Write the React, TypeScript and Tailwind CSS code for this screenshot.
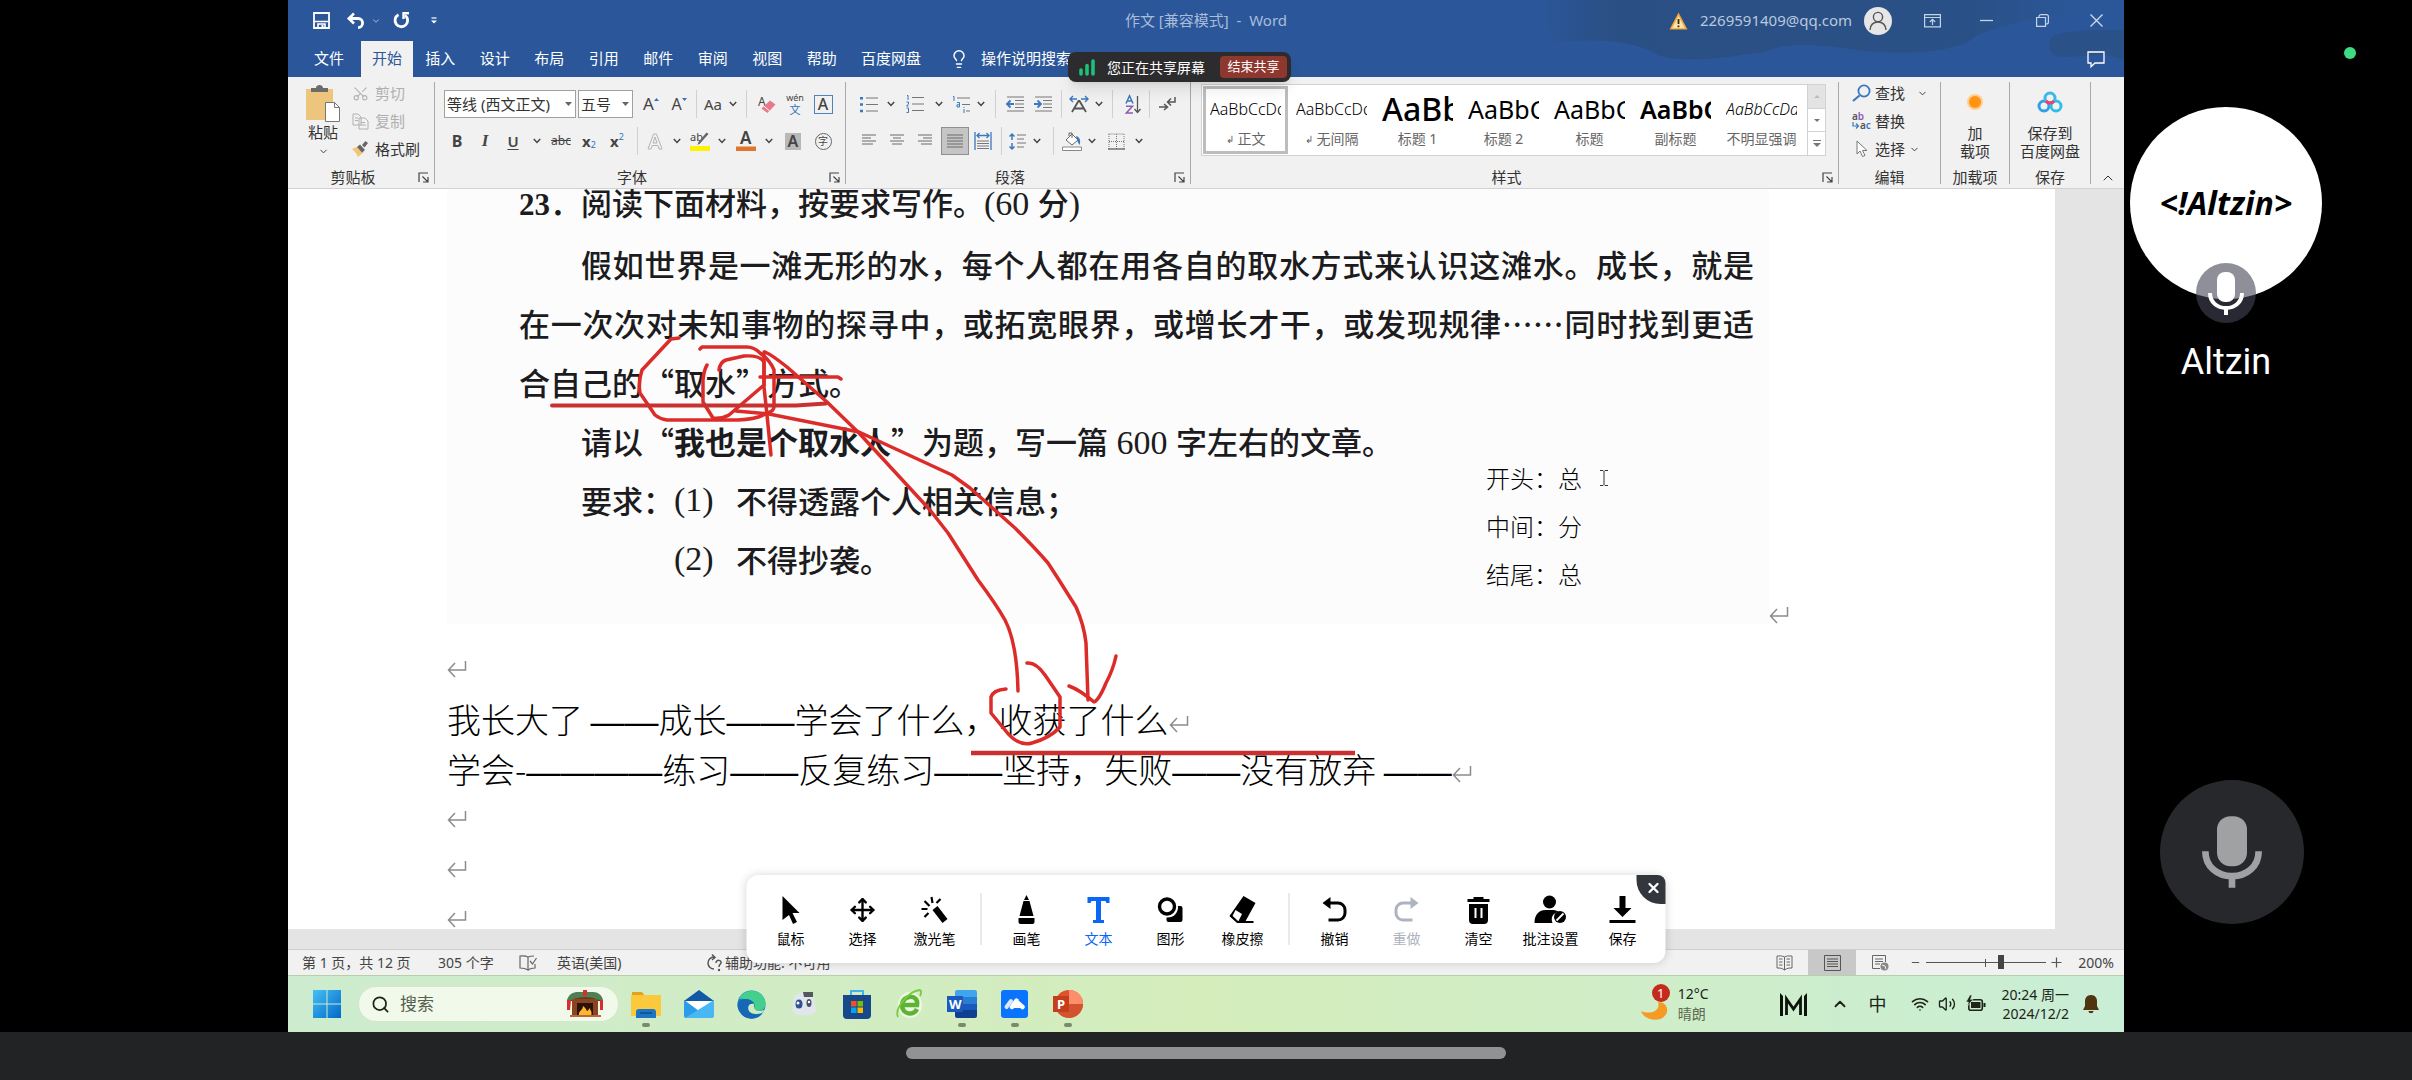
import { ReactNode } from "react";
import { clsx } from "clsx";
import {
    ChevronDown,
    ChevronUp,
    Lightbulb,
    Minus,
    Move,
    Scissors,
    Search,
    Volume2,
    Wifi,
    X,
} from "lucide-react";

const tabs = ["插入", "设计", "布局", "引用", "邮件", "审阅", "视图", "帮助"];

const styles = [
    { name: "正文", sample: "AaBbCcDd", look: "text-[16px] font-light", mark: true },
    { name: "无间隔", sample: "AaBbCcDd", look: "text-[16px] font-light", mark: true },
    { name: "标题 1", sample: "AaBb", look: "text-[32px] font-medium" },
    { name: "标题 2", sample: "AaBbC", look: "text-[25px]" },
    { name: "标题", sample: "AaBbC", look: "text-[25px]" },
    { name: "副标题", sample: "AaBbC", look: "text-[25px] font-semibold" },
    { name: "不明显强调", sample: "AaBbCcDd", look: "text-[16px] font-light italic text-[#404040]" },
];

function Svg({
    w,
    h,
    box,
    className = "",
    children,
}: {
    w: number;
    h: number;
    box?: string;
    className?: string;
    children: ReactNode;
}) {
    return (
        <svg
            width={w}
            height={h}
            viewBox={box ?? `0 0 ${w} ${h}`}
            fill="none"
            className={clsx("shrink-0 overflow-visible", className)}
            aria-hidden="true"
        >
            {children}
        </svg>
    );
}

function Tool({
    label,
    className = "w-7",
    children,
}: {
    label: string;
    className?: string;
    children: ReactNode;
}) {
    return (
        <button
            type="button"
            aria-label={label}
            className={clsx("flex h-7 shrink-0 items-center justify-center", className)}
        >
            {children}
        </button>
    );
}

function Chev({ className = "w-4", label = "更多" }: { className?: string; label?: string }) {
    return (
        <Tool label={label} className={className}>
            <Svg w={8} h={6}>
                <path d="M0.8 1l3.2 3.4L7.2 1" stroke="#444" strokeWidth="1.5" />
            </Svg>
        </Tool>
    );
}

function Sep({ className = "w-4" }: { className?: string }) {
    return (
        <span className={clsx("flex h-7 shrink-0 justify-center", className)}>
            <span className="h-full w-px bg-[#d0d0d0]" />
        </span>
    );
}

function Divider() {
    return <div className="mt-[5px] mb-1 w-px shrink-0 bg-[#a8a8a8]" />;
}

function Group({
    title,
    launcher = false,
    className = "",
    children,
}: {
    title: string;
    launcher?: boolean;
    className?: string;
    children: ReactNode;
}) {
    return (
        <section className={clsx("flex h-full flex-col", className)}>
            <div className="flex-1">{children}</div>
            <div className="flex h-[22px] items-center">
                <span className="flex-1 text-center text-[#333]">{title}</span>
                {launcher && (
                    <button type="button" aria-label={`${title}设置`} className="w-4">
                        <Svg w={11} h={11}>
                            <path d="M1 10V1h9M4.5 4.5l5 5M10 5v5H5" stroke="#444" strokeWidth="1.2" />
                        </Svg>
                    </button>
                )}
            </div>
        </section>
    );
}

function Combo({ label, value, className }: { label: string; value: string; className: string }) {
    return (
        <span className={clsx("relative h-7 shrink-0", className)}>
            <select
                aria-label={label}
                defaultValue={value}
                className="h-full w-full appearance-none border border-[#a0a0a0] bg-white pl-[2px] text-[15px] text-[#333]"
            >
                <option>{value}</option>
            </select>
            <Svg w={7} h={4} className="absolute top-3 right-1">
                <path d="M0 0h7L3.500 4z" fill="#666" />
            </Svg>
        </span>
    );
}

// stacked text lines used by the alignment buttons
function Lines({ rows }: { rows: number[][] }) {
    return (
        <Svg w={16} h={14}>
            {rows.map(([a, b], i) => (
                <path key={i} d={`M${a} ${1 + i * 3}H${b}`} stroke="#6a6a6a" />
            ))}
        </Svg>
    );
}

function TitleBar() {
    return (
        <div className="relative flex h-[41px] items-center bg-[#2b579a] text-white">
            <Svg w={600} h={77} className="pointer-events-none absolute top-0 right-0">
                <defs>
                    <linearGradient id="swirl" x1="0" y1="0" x2="1" y2="0">
                        <stop stopColor="#2b579a" />
                        <stop offset="0.15" stopColor="#2a4f84" />
                        <stop offset="0.8" stopColor="#2a5187" />
                        <stop offset="1" stopColor="#2b579a" />
                    </linearGradient>
                </defs>
                <path
                    d="M10 0C24 18 24 42 34 43 70 38 110 40 136 56 170 64 210 56 240 52 262 42 290 44 340 51 390 56 440 50 452 36 470 28 500 20 540 14L560 0Z"
                    fill="url(#swirl)"
                />
                <path d="M600 30C570 30 535 30 527 38 522 52 528 58 545 57 565 56 580 52 600 60Z" fill="#2a5188" />
            </Svg>
            <div className="relative flex items-center pl-[25px]">
                <button type="button" aria-label="保存" className="w-[34px]">
                    <Svg w={17} h={17}>
                        <path d="M1 1h15v15H1z" stroke="#fff" strokeWidth="1.8" />
                        <path d="M2 9.500h13M5 16v-4h7v4" stroke="#fff" strokeWidth="1.6" />
                        <path d="M8.500 13h2v3h-2z" fill="#fff" />
                    </Svg>
                </button>
                <button type="button" aria-label="撤销" className="w-6">
                    <Svg w={18} h={16}>
                        <path d="M2.500 5.500H11a4.600 4.600 0 010 9.200" stroke="#fff" strokeWidth="2.8" />
                        <path d="M7 0.500L1.800 5.500 7 10.500" stroke="#fff" strokeWidth="2.6" />
                    </Svg>
                </button>
                <button type="button" aria-label="撤销列表" className="w-[22px]">
                    <ChevronDown size={10} color="#c5d2e6" />
                </button>
                <button type="button" aria-label="重复" className="w-[38px]">
                    <Svg w={17} h={17}>
                        <path d="M5.500 2.800A6.300 6.300 0 1012 3.300" stroke="#fff" strokeWidth="2.8" />
                        <path d="M16 1.300h-5.500V7" stroke="#fff" strokeWidth="2.4" />
                    </Svg>
                </button>
                <button type="button" aria-label="自定义快速访问工具栏">
                    <Svg w={6} h={7}>
                        <path d="M0.500 1h5" stroke="#fff" strokeWidth="1.2" />
                        <path d="M0 3.500h6L3 6.500z" fill="#fff" />
                    </Svg>
                </button>
            </div>
            <h1 className="absolute inset-x-0 text-center text-[15px] whitespace-pre text-[#a9bcd9]">
                作文 [兼容模式]  -  Word
            </h1>
            <div className="relative ml-auto flex items-center text-[#b9c8de]">
                <Svg w={19} h={18} className="mr-3">
                    <path d="M9.500 0.500L18.500 17.500H0.500z" fill="#f0a63c" />
                    <path d="M9.500 4L16 16.200H3z" fill="#ffe3a6" />
                    <path d="M9.500 7v5M9.500 13.500v1.800" stroke="#3c2a10" strokeWidth="1.8" />
                </Svg>
                <span className="mr-3 text-[15px]">2269591409@qq.com</span>
                <span className="mr-8 flex h-7 w-7 items-center justify-center rounded-full bg-[#e6e6e6]">
                    <Svg w={18} h={20}>
                        <circle cx="9" cy="6" r="4.600" stroke="#555" strokeWidth="1.4" />
                        <path d="M1 19c0-5 3.500-8 8-8s8 3 8 8" stroke="#555" strokeWidth="1.4" />
                    </Svg>
                </span>
                <button type="button" aria-label="功能区显示选项" className="w-[56px]">
                    <Svg w={17} h={14}>
                        <path d="M0.600 0.600h15.800v12.200H0.600zM0.600 3.500h15.800M8.500 11V5.500M5.800 8l2.700-2.700L11.200 8" stroke="#c6d3e6" strokeWidth="1.2" />
                    </Svg>
                </button>
                <button type="button" aria-label="最小化" className="w-[56px]">
                    <Svg w={13} h={14}>
                        <path d="M0 6.500h13" stroke="#c6d3e6" strokeWidth="1.3" />
                    </Svg>
                </button>
                <button type="button" aria-label="还原" className="w-[54px]">
                    <Svg w={13} h={13}>
                        <path d="M0.600 3.500h8.900v8.900H0.600zM3 3.500V2.600a2 2 0 012-2h5.400a2 2 0 012 2V8a2 2 0 01-2 2h-.9" stroke="#c6d3e6" strokeWidth="1.2" />
                    </Svg>
                </button>
                <button type="button" aria-label="关闭" className="w-[34px]">
                    <Svg w={13} h={13}>
                        <path d="M0.500 0.500l12 12M12.500 0.500l-12 12" stroke="#d3dcea" strokeWidth="1.3" />
                    </Svg>
                </button>
            </div>
        </div>
    );
}

function TabRow() {
    return (
        <nav className="flex h-9 items-stretch bg-[#2b579a] text-[15px] text-white">
            <button type="button" className="ml-2 w-[65px] pb-px pl-px">
                文件
            </button>
            <button type="button" className="w-[52px] bg-[#f1f1f1] pb-px text-[#2b579a]">
                开始
            </button>
            <div className="grid w-[436px] grid-cols-8">
                {tabs.map((tab) => (
                    <button type="button" key={tab} className="pb-px whitespace-nowrap">
                        {tab}
                    </button>
                ))}
            </div>
            <button type="button" className="w-[84px] pb-px whitespace-nowrap">
                百度网盘
            </button>
            <button type="button" className="ml-4 flex items-center gap-3 pb-px whitespace-nowrap">
                <Lightbulb size={20} strokeWidth={1.700} />
                操作说明搜索
            </button>
            <button type="button" aria-label="批注" className="relative ml-auto w-[37px]">
                <Svg w={18} h={17}>
                    <path d="M1 1h16v11H8l-4 3.800V12H1z" stroke="#fff" strokeWidth="1.3" />
                </Svg>
            </button>
        </nav>
    );
}

function FontRows() {
    return (
        <div className="flex flex-col gap-[9px] pt-[13px] pl-2 text-[#444]">
            <div className="flex pl-px">
                <Combo label="字体" value="等线 (西文正文)" className="mr-[2px] w-[132px]" />
                <Combo label="字号" value="五号" className="mr-1 w-[55px]" />
                <Tool label="增大字号">
                    <span className="text-[17px]">A</span>
                    <Svg w={5} h={12}>
                        <path d="M0 3h5L2.500 0z" fill="#3b6fb5" />
                    </Svg>
                </Tool>
                <Tool label="减小字号">
                    <span className="text-[16px]">A</span>
                    <Svg w={5} h={12}>
                        <path d="M0 0h5L2.500 3z" fill="#3b6fb5" />
                    </Svg>
                </Tool>
                <Sep className="w-1.5" />
                <Tool label="更改大小写">
                    <span className="text-[15px]">Aa</span>
                </Tool>
                <Chev className="w-3" />
                <Sep className="w-3.5" />
                <Tool label="清除所有格式">
                    <Svg w={18} h={19}>
                        <text x="0" y="11" fontSize="12" fill="#444" fontFamily="Noto Sans">A</text>
                        <path d="M3.500 13.500L12 5.500l5.500 4L9.500 18z" fill="#e8788a" />
                        <path d="M6 11.200l5.500 4.800" stroke="#fff" />
                    </Svg>
                </Tool>
                <Tool label="拼音指南" className="w-7 flex-col">
                    <span className="text-[9px] leading-[10px]">wén</span>
                    <span className="text-[11px] leading-[13px] text-[#2f70b8]">文</span>
                </Tool>
                <Tool label="字符边框">
                    <span className="flex h-[19px] w-[19px] items-center justify-center border border-[#4f83bf] text-[16px] font-medium">
                        A
                    </span>
                </Tool>
            </div>
            <div className="flex">
                <Tool label="加粗">
                    <b className="text-[16px]">B</b>
                </Tool>
                <Tool label="倾斜">
                    <i className="font-['Liberation_Serif',serif] text-[17px] font-bold">I</i>
                </Tool>
                <Tool label="下划线">
                    <span className="text-[15px] font-semibold underline underline-offset-2">U</span>
                </Tool>
                <Chev className="w-5" />
                <Tool label="删除线">
                    <s className="text-[12px]">abc</s>
                </Tool>
                <Tool label="下标">
                    <b className="text-[15px]">x</b>
                    <span className="mt-2 text-[9px] text-[#2f70b8]">2</span>
                </Tool>
                <Tool label="上标">
                    <b className="text-[15px]">x</b>
                    <span className="mb-2 text-[9px] text-[#2f70b8]">2</span>
                </Tool>
                <Sep className="w-3" />
                <Tool label="文本效果" className="w-6">
                    <Svg w={16} h={17}>
                        <path d="M1 16L6.500 1h3L15 16h-3l-1.200-3.500H5.200L4 16zM6 10h4L8 4z" stroke="#b4b4b4" />
                    </Svg>
                </Tool>
                <Chev className="w-5" />
                <Tool label="突出显示" className="w-[26px]">
                    <Svg w={20} h={20}>
                        <text x="0" y="10" fontSize="11" fill="#444" fontFamily="Noto Sans">ab</text>
                        <path d="M18.500 3L10 12.500 7.500 14l1-3L16.500 1.500z" fill="#666" />
                        <path d="M0 15h20v5H0z" fill="#fff200" />
                    </Svg>
                </Tool>
                <Chev className="w-[18px]" />
                <Tool label="字体颜色" className="w-[30px]">
                    <Svg w={20} h={20}>
                        <text x="4" y="13" fontSize="17" fill="#444" fontFamily="Noto Sans" fontWeight="600">A</text>
                        <path d="M0 15.500h20V20H0z" fill="#e0762c" />
                    </Svg>
                </Tool>
                <Chev className="w-4" />
                <Tool label="字符底纹" className="w-8">
                    <span className="flex h-[17px] w-4 items-center justify-center bg-[#b8b8b8] text-[16px] font-semibold">
                        A
                    </span>
                </Tool>
                <Tool label="带圈字符">
                    <span className="flex h-[17px] w-[17px] items-center justify-center rounded-full border border-[#666] text-[10px] leading-none">
                        字
                    </span>
                </Tool>
            </div>
        </div>
    );
}

function ParagraphRows() {
    return (
        <div className="flex flex-col gap-[9px] pt-[13px] pl-[9px]">
            <div className="flex">
                <Tool label="项目符号">
                    <Svg w={18} h={17}>
                        <path d="M6 2h12M6 8.500h12M6 15h12" stroke="#777" />
                        <path d="M0 1h3v2.500H0zM0 7.300h3v2.500H0zM0 13.800h3v2.500H0z" fill="#3b78bd" />
                    </Svg>
                </Tool>
                <Chev />
                <Tool label="编号" className="w-8">
                    <Svg w={18} h={18}>
                        <path d="M6 2.500h12M6 9h12M6 15.500h12" stroke="#777" />
                        <path d="M1 0.500h1V5M0.500 7h2v2l-2 2h2M0.500 13h2v4.500h-2" stroke="#3b78bd" />
                    </Svg>
                </Tool>
                <Chev />
                <Tool label="多级列表">
                    <Svg w={18} h={17}>
                        <path d="M5 2h13M10 8.500h8M14 15h4" stroke="#777" />
                        <path d="M1 0.500h1V5M5 6.500h2.500V11H5V8.800h2M12 11v1M12 13v4" stroke="#3b78bd" />
                    </Svg>
                </Tool>
                <Chev className="w-3" />
                <Sep />
                <Tool label="减少缩进量" className="w-6">
                    <Svg w={18} h={16}>
                        <path d="M1 1h17M9 4.500h9M9 8h9M9 11.500h9M1 15h17" stroke="#777" />
                        <path d="M8 8H1.500M4.500 4.500L1 8l3.500 3.500" stroke="#3b78bd" strokeWidth="1.800" />
                    </Svg>
                </Tool>
                <Tool label="增加缩进量" className="w-8">
                    <Svg w={18} h={16}>
                        <path d="M1 1h17M9 4.500h9M9 8h9M9 11.500h9M1 15h17" stroke="#777" />
                        <path d="M0 8h6.500M3.500 4.500L7 8l-3.500 3.500" stroke="#3b78bd" strokeWidth="1.800" />
                    </Svg>
                </Tool>
                <Sep className="w-1" />
                <Tool label="中文版式" className="w-8">
                    <Svg w={20} h={18}>
                        <path d="M1 4h7M4 1L1 4l3 3M19 4h-7M16 1l3 3-3 3" stroke="#3b78bd" strokeWidth="1.400" />
                        <path d="M3 17L9.500 6h1L17 17M5.500 13.500h9" stroke="#555" strokeWidth="1.800" />
                    </Svg>
                </Tool>
                <Chev className="w-2" />
                <Sep className="w-[18px]" />
                <Tool label="排序" className="w-6">
                    <Svg w={17} h={19}>
                        <path d="M1 8.500L4.500 0.800 8 8.500M2.300 6h4.400" stroke="#3b78bd" strokeWidth="1.500" />
                        <path d="M1 11.300h6.500L1.300 18H8" stroke="#8d5bb5" strokeWidth="1.500" />
                        <path d="M12.500 1v16M9.500 14l3 3.500 3-3.500" stroke="#555" strokeWidth="1.300" />
                    </Svg>
                </Tool>
                <Sep className="w-2" />
                <Tool label="显示编辑标记">
                    <Svg w={17} h={16}>
                        <path d="M16 1v5H9M12 2.500L8.500 6l3.500 3.500M0 11h8M5 8l3.500 3L5 14" stroke="#555" strokeWidth="1.500" />
                    </Svg>
                </Tool>
            </div>
            <div className="flex">
                <Tool label="左对齐">
                    <Lines rows={[[1, 15], [1, 10], [1, 15], [1, 12]]} />
                </Tool>
                <Tool label="居中">
                    <Lines rows={[[1, 15], [4, 12], [1, 15], [3, 13]]} />
                </Tool>
                <Tool label="右对齐">
                    <Lines rows={[[1, 15], [6, 15], [1, 15], [4, 15]]} />
                </Tool>
                <Tool label="两端对齐" className="ml-[2px] w-7 border border-[#8f8f8f] bg-[#c5c5c5]">
                    <Lines rows={[[0, 16], [0, 16], [0, 16], [0, 16], [0, 16]]} />
                </Tool>
                <Tool label="分散对齐">
                    <Svg w={18} h={18}>
                        <path d="M1 0v18M17 0v18M3 3.500h12M5.500 1L3 3.500 5.500 6M12.500 1L15 3.500 12.500 6" stroke="#3b78bd" strokeWidth="1.300" />
                        <path d="M3 9h12M3 11.500h12M3 14h12M3 16.500h12" stroke="#777" />
                    </Svg>
                </Tool>
                <Sep className="w-2" />
                <Tool label="行和段落间距" className="w-6">
                    <Svg w={17} h={17}>
                        <path d="M8 2h9M8 6h7M8 10h9M8 14h7" stroke="#777" />
                        <path d="M3 1v6M0.500 3.500L3 1l2.500 2.500M3 10v6M0.500 13.500L3 16l2.500-2.500" stroke="#3b78bd" strokeWidth="1.500" />
                    </Svg>
                </Tool>
                <Chev />
                <Sep />
                <Tool label="底纹" className="w-[22px]">
                    <Svg w={20} h={19}>
                        <path d="M4 8l6-6 6 6-6 5z" fill="#fff" stroke="#666" />
                        <path d="M7 4V1h3v5" stroke="#666" />
                        <path d="M14 4c4 1 5 5 3.500 9C16 11 15 8 14 4z" fill="#3b78bd" />
                        <path d="M0.500 15h19v3.500H0.500z" fill="#fff" stroke="#888" />
                    </Svg>
                </Tool>
                <Chev className="w-[18px]" />
                <Tool label="边框" className="w-[30px]">
                    <Svg w={17} h={17}>
                        <path d="M0.500 1h16M1 1v15M16 1v15M8.500 1v15M1 8.500h15" stroke="#777" strokeDasharray="1 1" />
                        <path d="M0 16h17" stroke="#555" strokeWidth="1.200" />
                    </Svg>
                </Tool>
                <Chev />
            </div>
        </div>
    );
}

function StyleGallery() {
    return (
        <div className="mt-[7px] mr-3 ml-[10px] flex h-[72px] border border-[#d2d2d2] bg-white">
            <div className="flex flex-1 gap-px overflow-hidden p-px">
                {styles.map((s, i) => (
                    <button
                        type="button"
                        key={s.name}
                        className={clsx(
                            "flex h-full w-[85px] shrink-0 flex-col justify-between border-[3px] pt-1",
                            i === 0 ? "border-[#bdbdbd]" : "border-transparent"
                        )}
                    >
                        <span
                            className={clsx(
                                "mx-1 flex h-8 w-[71px] items-center self-start overflow-hidden leading-8 whitespace-nowrap text-black",
                                s.look
                            )}
                        >
                            {s.sample}
                        </span>
                        <span className="flex h-6 w-full items-center justify-center text-[14px] whitespace-nowrap text-[#666]">
                            {s.mark && <span className="mr-1 text-[10px]">↲</span>}
                            {s.name}
                        </span>
                    </button>
                ))}
            </div>
            <div className="flex w-[18px] flex-col divide-y divide-[#d2d2d2] border-l border-[#d2d2d2]">
                <button type="button" aria-label="上一行" className="flex flex-1 items-center justify-center bg-[#e3e3e3]">
                    <Svg w={6} h={3}>
                        <path d="M0 3h6L3 0z" fill="#bbb" />
                    </Svg>
                </button>
                <button type="button" aria-label="下一行" className="flex flex-1 items-center justify-center">
                    <Svg w={6} h={3}>
                        <path d="M0 0h6L3 3z" fill="#777" />
                    </Svg>
                </button>
                <button type="button" aria-label="其他样式" className="flex flex-1 items-center justify-center">
                    <Svg w={8} h={7}>
                        <path d="M0 0.500h8" stroke="#777" />
                        <path d="M0 3h8L4 7z" fill="#777" />
                    </Svg>
                </button>
            </div>
        </div>
    );
}

function Ribbon() {
    return (
        <div className="flex h-28 shrink-0 border-b border-[#d2d2d2] bg-[#f1f1f1] text-[15px] leading-5">
            <Group title="剪贴板" launcher className="w-[146px]">
                <div className="flex pt-[2px]">
                    <button type="button" className="ml-[10px] flex w-[50px] flex-col items-center pt-[6px] text-[#333]">
                        <Svg w={34} h={37}>
                            <path d="M0 4h27v31H0z" fill="#edc57c" />
                            <path d="M5 3h5c0-4 7-4 7 0h5v4H5z" fill="#6b6b6b" />
                            <path d="M19.500 17.500h9l5 5v14h-14z" fill="#fff" stroke="#777" />
                            <path d="M28.500 17.500v5h5" stroke="#777" />
                        </Svg>
                        <span>粘贴</span>
                        <ChevronDown size={11} className="mt-[4px]" />
                    </button>
                    <div className="flex flex-col pl-1 text-[#b0b0b0]">
                        <button type="button" className="flex h-7 items-center gap-[6px]">
                            <Scissors size={17} strokeWidth={1.500} className="-rotate-90" />
                            剪切
                        </button>
                        <button type="button" className="flex h-7 items-center gap-[6px]">
                            <Svg w={17} h={17}>
                                <path d="M1 1h5l3 3v8H1zM7 5h6l3 3v8H7zM3 5h3M3 7.500h3M9 9.500h4M9 12h5" stroke="#b0b0b0" fill="#f1f1f1" />
                            </Svg>
                            复制
                        </button>
                        <button type="button" className="flex h-7 items-center gap-[6px] text-[#333]">
                            <Svg w={17} h={16}>
                                <path d="M0 8l7-3 5 6-6 5c-1-3-3-5-6-8z" fill="#edc57c" />
                                <path d="M5 6l3-2.500 5 5.500-3 2.500zM10 4l3.500-4 2.500 2-3.500 4.500z" fill="#666" />
                            </Svg>
                            格式刷
                        </button>
                    </div>
                </div>
            </Group>
            <Divider />
            <Group title="字体" launcher className="w-[410px]">
                <FontRows />
            </Group>
            <Divider />
            <Group title="段落" launcher className="w-[344px]">
                <ParagraphRows />
            </Group>
            <Divider />
            <Group title="样式" launcher className="min-w-0 flex-1">
                <StyleGallery />
            </Group>
            <Divider />
            <Group title="编辑" className="w-[101px]">
                <div className="flex flex-col pt-[2px] pl-[13px] text-[#333]">
                    <button type="button" className="flex h-7 items-center gap-1">
                        <Svg w={19} h={18}>
                            <circle cx="12" cy="7" r="5.600" stroke="#3b78bd" strokeWidth="1.800" />
                            <path d="M7.500 11.500L1 17" stroke="#3b78bd" strokeWidth="2.200" />
                        </Svg>
                        查找
                        <ChevronDown size={11} className="ml-2" />
                    </button>
                    <button type="button" className="flex h-7 items-center gap-1">
                        <Svg w={19} h={18}>
                            <text x="0" y="8" fontSize="10" fontWeight="600" fill="#555" fontFamily="Noto Sans">
                                a<tspan fill="#8d5bb5">b</tspan>
                            </text>
                            <text x="8" y="17" fontSize="10" fontWeight="600" fill="#555" fontFamily="Noto Sans">
                                a<tspan fill="#3b78bd">c</tspan>
                            </text>
                            <path d="M1 10v4h5M4 11.500L6.500 14 4 16.500" stroke="#3b78bd" strokeWidth="1.200" />
                        </Svg>
                        替换
                    </button>
                    <button type="button" className="flex h-7 items-center gap-1">
                        <Svg w={19} h={18}>
                            <path d="M5 1v13l3-3 2.500 5.500 2.500-1-2.500-5h4.500z" fill="#fff" stroke="#777" />
                        </Svg>
                        选择
                        <ChevronDown size={11} />
                    </button>
                </div>
            </Group>
            <Divider />
            <Group title="加载项" className="w-[68px]">
                <button type="button" className="flex w-full flex-col items-center pt-[19px] leading-[18px] text-[#333]">
                    <span className="mb-[16px] h-3 w-3 rounded-full bg-[#ff9412] ring-2 ring-[#ffcf8f]" />
                    <span>加</span>
                    <span>载项</span>
                </button>
            </Group>
            <Divider />
            <Group title="保存" className="w-[80px]">
                <button type="button" className="flex w-full flex-col items-center pt-[14px] leading-[18px] text-[#333]">
                    <Svg w={26} h={22} className="mb-[11px]">
                        <circle cx="7" cy="15" r="5" stroke="#2f9fe8" strokeWidth="3" />
                        <circle cx="19" cy="15" r="5" stroke="#2fc0e8" strokeWidth="3" />
                        <circle cx="13" cy="7" r="5" stroke="#3bb7ea" strokeWidth="3" />
                        <path d="M9 10a5 5 0 008 0" stroke="#ee4266" strokeWidth="3" />
                    </Svg>
                    <span>保存到</span>
                    <span className="whitespace-nowrap">百度网盘</span>
                </button>
            </Group>
            <Divider />
            <div className="flex w-[33px] items-end justify-center pb-0.5">
                <button type="button" aria-label="折叠功能区">
                    <ChevronUp size={16} strokeWidth={1.500} color="#333" />
                </button>
            </div>
        </div>
    );
}

function Return() {
    return (
        <Svg w={20} h={18} className="inline-block align-middle">
            <path d="M18.500 1v9H1.500M8 3L1.500 10 8 17" stroke="#8c8c8c" strokeWidth="1.500" />
        </Svg>
    );
}

function Dash({ long = false }: { long?: boolean }) {
    return (
        <span className="font-['Liberation_Sans',sans-serif] leading-none">{long ? "————" : "——"}</span>
    );
}

function Ink() {
    return (
        <svg
            className="pointer-events-none absolute top-0 left-0"
            width="1836"
            height="740"
            viewBox="288 189 1836 740"
            fill="none"
            stroke="#dc2c2a"
            strokeWidth="3.500"
            strokeLinecap="round"
            strokeLinejoin="round"
            aria-hidden="true"
        >
            <path d="M679 338L671 339 642 370Q638 382 640 393L655 415Q660 419 667 420L738 420Q758 419 767 413 774 411 774 407L774 370Q770 360 760 353 754 347 747 347L702 347 700 349" />
            <path d="M719 370Q720 362 726 360L744 356Q760 355 764 362L764 385 729 415Q722 419 713 418L703 402V380Q704 370 707 365" />
            <path d="M764 352V387L767 415 771 455" />
            <path d="M760 377H838L841 379" />
            <path d="M552 405.500H796L826 403.500" strokeWidth="4" stroke="#c93030" />
            <path d="M765 352Q772 355 787 367L827 402 859 433 930 510 948 533 978 580Q996 604 1005 620 1017 643 1018 691" />
            <path d="M736 411L769 414 859 432 952 475 970 488 1015 528Q1036 549 1048 563L1059 580 1076 607Q1084 625 1086 643L1088 700" />
            <path d="M1069 686Q1080 690 1094 702 1099 700 1106 683 1113 670 1116 656" />
            <path d="M1027 663Q1036 662 1045 675L1060 697V727Q1050 738 1032 743 1018 747 1005 730L991 713V697Q993 690 1006 689" />
            <path d="M971 753H1355" strokeWidth="4.500" stroke="#c93030" strokeLinecap="butt" />
        </svg>
    );
}

function ExamScan() {
    return (
        <div className="flex items-end">
            <article className="relative h-[435px] max-w-[1322px] flex-1 bg-[#fcfcfd] pr-[15px] pl-[72px] text-[31px] leading-[59px] font-medium text-[#1c1c20]">
                <p className="-mt-[17px]">
                    <span className="font-['Liberation_Serif',serif] font-bold">23</span>．阅读下面材料，按要求写作。
                    <span className="font-['Liberation_Serif',serif] text-[34px] leading-none">(60 </span>分
                    <span className="font-['Liberation_Serif',serif] text-[34px] leading-none">)</span>
                </p>
                <p className="text-justify indent-[62px]">
                    假如世界是一滩无形的水，每个人都在用各自的取水方式来认识这滩水。成长，就是在一次次对未知事物的探寻中，或拓宽眼界，或增长才干，或发现规律……同时找到更适合自己的“取水”方式。
                </p>
                <p className="indent-[62px]">
                    请以“<b className="font-bold">我也是个取水人</b>”为题，写一篇
                    <span className="font-['Liberation_Serif',serif] text-[34px] leading-none"> 600 </span>
                    字左右的文章。
                </p>
                <div className="flex pl-[62px]">
                    <p>要求：</p>
                    <ol>
                        <li className="flex">
                            <span className="w-[62px] font-['Liberation_Serif',serif] text-[34px]">(1)</span>
                            不得透露个人相关信息；
                        </li>
                        <li className="flex">
                            <span className="w-[62px] font-['Liberation_Serif',serif] text-[34px]">(2)</span>
                            不得抄袭。
                        </li>
                    </ol>
                </div>
                {/* floating text box laid over the scan */}
                <div className="absolute top-[265px] left-[1039px] text-[24px] leading-[48px] font-light text-black">
                    <p className="flex items-center">
                        开头：总
                        <Svg w={8} h={16} className="ml-[18px]">
                            <path d="M0 0.500h3l1 1 1-1h3M4 1.500v13M0 15.500h3l1-1 1 1h3" stroke="#333" />
                        </Svg>
                    </p>
                    <p>中间：分</p>
                    <p>结尾：总</p>
                </div>
            </article>
            <Return />
        </div>
    );
}

function Document() {
    return (
        <main
            lang="zh-CN"
            className="relative flex min-h-0 flex-1 overflow-hidden bg-[#e4e4e4] pb-5 font-['Noto_Sans_CJK_SC','Noto_Sans',sans-serif]"
        >
            <div className="flex-1 bg-white pl-[159px]">
                <ExamScan />
                <div className="mt-5 text-[34px] leading-[50px] font-light text-black">
                    <p className="flex h-[50px] items-center"><Return /></p>
                    <p className="h-[50px] whitespace-nowrap">
                        我长大了 <Dash />成长<Dash />学会了什么，收获了什么
                        <Return />
                    </p>
                    <p className="h-[50px] whitespace-nowrap">
                        学会-<Dash long />练习<Dash />反复练习<Dash />坚持，失败<Dash />没有放弃 <Dash />
                        <Return />
                    </p>
                    <p className="flex h-[50px] items-center"><Return /></p>
                    <p className="flex h-[50px] items-center"><Return /></p>
                    <p className="flex h-[50px] items-center"><Return /></p>
                </div>
            </div>
            <div className="w-[69px] shrink-0" />
            <Ink />
        </main>
    );
}

function StatusBar() {
    return (
        <div className="flex h-[26px] shrink-0 items-center border-t border-[#cfcfcf] bg-[#f1f1f1] pl-[14px] text-[14px] text-[#444]">
            <span className="w-[136px]">第 1 页，共 12 页</span>
            <span className="w-[81px]">305 个字</span>
            <Svg w={18} h={16} className="mr-5">
                <path d="M9 2C6 0.500 4 1 1 1v12c3 0 5 0 8 2V2c2-1 4-1 6-1M9 15c2-1.500 4-2 7-2V9M11 6l2.500 3L17.500 3" stroke="#666" strokeWidth="1.200" />
            </Svg>
            <span className="w-[148px]">英语(美国)</span>
            <Svg w={18} h={18} className="mr-[2px]">
                <path d="M9 3a6 6 0 100 12M7 0.500L10 3.500 7 6M11 9c0-4 6-3 5 0-.5 1.500-2 1.500-2 4" stroke="#555" strokeWidth="1.500" />
                <circle cx="14" cy="16" r="1.200" fill="#555" />
            </Svg>
            <span>辅助功能: 不可用</span>
            <div className="ml-auto flex h-full items-center">
                <button type="button" aria-label="阅读视图" className="mr-[15px]">
                    <Svg w={17} h={16}>
                        <path d="M8.500 2C6 0.500 3 1 1 1v12c3 0 5 0 7.500 2C11 13 13 13 16 13V1c-3 0-5-.5-7.500 1zv13M3 4h3.500M3 7h3.500M3 10h3.500M10.500 4H14M10.500 7H14M10.500 10H14" stroke="#666" />
                    </Svg>
                </button>
                <button type="button" aria-label="页面视图" className="flex h-full w-12 items-center justify-center bg-[#c8c8c8]">
                    <Svg w={17} h={16}>
                        <path d="M0.500 0.500h16v15H0.500zM3 4h11M3 6.500h11M3 9h11M3 11.500h11" stroke="#555" />
                    </Svg>
                </button>
                <button type="button" aria-label="Web 版式" className="mr-[21px] ml-4">
                    <Svg w={17} h={16}>
                        <path d="M8 13.500H0.500V0.500h13V7M3 4h8M3 6.500h8M3 9h5" stroke="#666" />
                        <circle cx="12.500" cy="11.500" r="4" fill="#888" />
                        <path d="M10 10l3 1 1 3" stroke="#f1f1f1" />
                    </Svg>
                </button>
                <button type="button" aria-label="缩小">
                    <Minus size={11} strokeWidth={2.500} color="#555" />
                </button>
                <span className="relative mx-[5px] flex w-[120px] items-center">
                    <span className="absolute left-[59px] h-2 w-px bg-[#555]" />
                    <input
                        type="range"
                        aria-label="缩放"
                        min={0}
                        max={100}
                        defaultValue={63}
                        className="relative h-4 w-full appearance-none bg-transparent [&::-webkit-slider-runnable-track]:h-px [&::-webkit-slider-runnable-track]:bg-[#555] [&::-webkit-slider-thumb]:-mt-[7px] [&::-webkit-slider-thumb]:h-[14px] [&::-webkit-slider-thumb]:w-[6px] [&::-webkit-slider-thumb]:appearance-none [&::-webkit-slider-thumb]:bg-[#444]"
                    />
                </span>
                <button type="button" aria-label="放大">
                    <Svg w={11} h={11}>
                        <path d="M0.500 5.500h10M5.500 0.500v10" stroke="#555" strokeWidth="1.200" />
                    </Svg>
                </button>
                <span className="w-[62px] pr-[10px] text-right">200%</span>
            </div>
        </div>
    );
}

const apps = [
    {
        name: "文件资源管理器",
        open: true,
        icon: (
            <Svg w={30} h={28}>
                <path d="M1 2h10l3 4H1z" fill="#e3a21a" />
                <path d="M1 5h28a1 1 0 011 1v20H0V6a1 1 0 011-1z" fill="#fcc93d" />
                <path d="M5 28v-6a3 3 0 013-3h14a3 3 0 013 3v6z" fill="#1a76c4" />
                <path d="M9 23h12" stroke="#0f5796" strokeWidth="2" />
            </Svg>
        ),
    },
    {
        name: "邮件",
        icon: (
            <Svg w={30} h={28}>
                <path d="M0 11L15 0l15 11v6H0z" fill="#1159a5" />
                <path d="M1 11h28L15 22z" fill="#fff" />
                <path d="M0 10l15 11v7H2a2 2 0 01-2-2z" fill="#2b9de8" />
                <path d="M30 10v16a2 2 0 01-2 2H1z" fill="#48b7f3" />
            </Svg>
        ),
    },
    {
        name: "Edge",
        icon: (
            <Svg w={29} h={29}>
                <circle cx="14.500" cy="14.500" r="14" fill="#1b7fd0" />
                <path d="M2 9C7-2 24-2 28 10c2 7-2 11-7 11-3 0-5-1-4-3 3-5-3-10-15-9z" fill="#45cf8d" />
                <path d="M1 13c3-6 14-5 16 1-5-1-7 3-5 7 2 3 7 5 13 3-6 7-18 6-22-2-2-3-3-6-2-9z" fill="#1667b5" />
                <path d="M17 14c-5-1-7 3-5 7 2 3 7 4 13 2 1-1 2-2 2-3-5 2-11 2-10-6z" fill="#d3ecbd" />
            </Svg>
        ),
    },
    {
        name: "助手",
        icon: (
            <Svg w={26} h={24}>
                <path d="M3 5c4-6 14-6 19-2l3 16c-4 6-20 6-24 0z" fill="#e1e5ec" />
                <path d="M12 0h10v5H13z" fill="#54565c" />
                <ellipse cx="8" cy="12" rx="3.500" ry="4.500" fill="#31518c" />
                <ellipse cx="18" cy="11" rx="2.500" ry="4" fill="#46506a" />
                <circle cx="7" cy="11" r="1.500" fill="#fff" />
                <circle cx="18" cy="10" r="1.200" fill="#fff" />
            </Svg>
        ),
    },
    {
        name: "Microsoft Store",
        icon: (
            <Svg w={28} h={30}>
                <path d="M8 8V2h12v6" stroke="#3fb4ea" strokeWidth="2" />
                <path d="M0 6h28v20a4 4 0 01-4 4H4a4 4 0 01-4-4z" fill="#17498a" />
                <path d="M8 12h5.500v5.500H8z" fill="#f25022" />
                <path d="M14.500 12H20v5.500h-5.500z" fill="#7fba00" />
                <path d="M8 18.500h5.500V24H8z" fill="#00a4ef" />
                <path d="M14.500 18.500H20V24h-5.500z" fill="#ffb900" />
            </Svg>
        ),
    },
    {
        name: "360 浏览器",
        icon: (
            <Svg w={28} h={30}>
                <ellipse cx="14" cy="16" rx="12" ry="13" fill="#eef8e4" />
                <path d="M6 16h15c2-11-14-11-15 0 0 10 12 11 15 4" stroke="#5cb531" strokeWidth="4.500" />
                <path d="M2 28C-2 20 12 2 24 1c2 1 1 4 0 6" stroke="#7cc943" strokeWidth="1.800" />
            </Svg>
        ),
    },
    {
        name: "Word",
        open: true,
        icon: (
            <Svg w={30} h={28}>
                <path d="M8 2a2 2 0 012-2h18a2 2 0 012 2v6H8z" fill="#41a5ee" />
                <path d="M8 7h22v7H8z" fill="#2b7cd3" />
                <path d="M8 14h22v7H8z" fill="#185abd" />
                <path d="M8 20h22v6a2 2 0 01-2 2H10a2 2 0 01-2-2z" fill="#103f91" />
                <path d="M0 6h16v16H0z" fill="#185abd" />
                <text x="2" y="19" fontSize="13" fontWeight="700" fill="#fff" fontFamily="Noto Sans">W</text>
            </Svg>
        ),
    },
    {
        name: "腾讯会议",
        open: true,
        icon: (
            <Svg w={27} h={28}>
                <rect width="27" height="28" rx="3" fill="#0a74ff" />
                <path d="M5.500 17l4.500-6" stroke="#d9e9ff" strokeWidth="4" strokeLinecap="round" />
                <path d="M11 17l4.500-6.500M17 13l4.500 4" stroke="#fff" strokeWidth="4.500" strokeLinecap="round" />
                <path d="M11 18l5-7 5 7z" fill="#fff" />
            </Svg>
        ),
    },
    {
        name: "PowerPoint",
        open: true,
        icon: (
            <Svg w={30} h={28}>
                <circle cx="16" cy="14" r="14" fill="#e0522f" />
                <path d="M16 0a14 14 0 0114 14H16z" fill="#ff8f6b" />
                <path d="M3 19a14 14 0 0027-5H16z" fill="#d35230" />
                <path d="M0 6h16v16H0z" fill="#c43e1c" />
                <text x="4" y="19" fontSize="13" fontWeight="700" fill="#fff" fontFamily="Noto Sans">P</text>
            </Svg>
        ),
    },
];

function Taskbar() {
    return (
        <footer className="flex h-[57px] shrink-0 items-center border-t border-[#b9cfa6] bg-linear-to-r from-[#cdeccf] via-[#d5edbb] via-50% to-[#c9eed6] pl-[25px] text-[14px] text-[#1d2418]">
            <button type="button" aria-label="开始" className="mr-[17px]">
                <Svg w={28} h={28}>
                    <defs>
                        <linearGradient id="win" x1="0" y1="0" x2="1" y2="1">
                            <stop stopColor="#45c1f5" />
                            <stop offset="1" stopColor="#0068c9" />
                        </linearGradient>
                    </defs>
                    <path d="M0 0h13.500v13.500H0zM14.500 0H28v13.500H14.500zM0 14.500h13.500V28H0zM14.500 14.500H28V28H14.500z" fill="url(#win)" />
                </Svg>
            </button>
            <label className="mr-[3px] flex h-9 w-[261px] items-center rounded-full border border-[#d6e6c8] bg-[#f0f9ea] pr-[14px] pl-3">
                <Search size={19} strokeWidth={2.200} />
                <input
                    type="search"
                    placeholder="搜索"
                    className="ml-[10px] w-0 flex-1 bg-transparent text-[17px] placeholder:text-[#55604f]"
                />
                <Svg w={38} h={28}>
                    <path d="M4 7h30v4H4z" fill="#6b3a1d" />
                    <path d="M6 9h26v18H6z" fill="#8a4520" />
                    <path d="M11 13h16v13H11z" fill="#2c1208" />
                    <path d="M13 26c-1-6 4-5 4-10 4 3 3 4 4 5 2-1 2-2 2-3 3 3 3 6 2 8z" fill="#ffb52e" />
                    <path d="M1 10c2-6 6-8 11-8h15c5 0 9 3 10 8-5 1-8-3-18-3S6 11 1 10z" fill="#4f8054" />
                    <path d="M17 0h4v6h-4zM1 10h4l-1 10H1zM34 10h3v10h-3z" fill="#d62f2f" />
                    <path d="M4 26h31" stroke="#b5683a" strokeWidth="2" />
                </Svg>
            </label>
            <div className="grid h-full w-[474px] grid-cols-9">
                {apps.map((app) => (
                    <button
                        type="button"
                        key={app.name}
                        aria-label={app.name}
                        className="relative flex items-center justify-center pr-1"
                    >
                        {app.icon}
                        {app.open && (
                            <span className="absolute bottom-[5px] h-1 w-2 rounded-full bg-[#7b8a6c]" />
                        )}
                    </button>
                ))}
            </div>
            <div className="ml-auto flex items-center">
                <button type="button" className="mr-[71px] flex items-center gap-2 text-left leading-5">
                    <span className="relative">
                        <Svg w={30} h={40}>
                            <path d="M18 18c3 9-8 13-17 9 3 10 22 13 26 1 1-6-3-10-9-10z" fill="#f59a23" />
                        </Svg>
                        <span className="absolute top-0 right-0 flex h-[18px] w-[18px] items-center justify-center rounded-full bg-[#c42b1c] text-[13px] leading-none text-white">
                            1
                        </span>
                    </span>
                    <span>
                        12°C
                        <span className="block text-[#5c6a50]">晴朗</span>
                    </span>
                </button>
                <Svg w={27} h={23} className="mr-6">
                    <path d="M0 0l3 3v20H0zM27 0l-3 3v20h3z" fill="#0e140c" />
                    <path d="M6.500 22V6l7 10 7-10v16" stroke="#0e140c" strokeWidth="2.800" />
                </Svg>
                <button type="button" aria-label="显示隐藏的图标" className="mr-5">
                    <ChevronUp size={18} strokeWidth={2.500} />
                </button>
                <span className="mr-6 text-[18px]">中</span>
                <Wifi size={18} strokeWidth={2.200} className="mr-[9px]" />
                <Volume2 size={18} strokeWidth={1.800} className="mr-[10px]" />
                <Svg w={20} h={18} className="mr-4">
                    <rect x="2.800" y="4.800" width="13.500" height="10.400" rx="2" stroke="#1d2418" strokeWidth="1.600" />
                    <path d="M5 7h9.500v6H5zM17.500 8h2v4h-2z" fill="#1d2418" />
                    <path d="M4 0L0 7h2.500L1.500 11 7 4.500H4.500L6 0z" fill="#1d2418" stroke="#cfeec8" strokeWidth="0.600" />
                </Svg>
                <time className="mr-[14px] text-right leading-[19px]" dateTime="2024-12-02T20:24">
                    20:24 周一
                    <br />
                    2024/12/2
                </time>
                <Svg w={16} h={18} className="mr-[25px]">
                    <path d="M8 0C4 0 2 3 2 6v5l-2 4h16l-2-4V6c0-3-2-6-6-6zM5.500 16h5c0 3-5 3-5 0z" fill="#50340f" />
                </Svg>
            </div>
        </footer>
    );
}

function BackArrow({ flip = false }: { flip?: boolean }) {
    return (
        <Svg w={26} h={26} className={flip ? "-scale-x-100" : ""}>
            <path d="M5 6h11.500a7 7 0 017 7v3a7 7 0 01-7 7H7" stroke="currentColor" strokeWidth="3" />
            <path d="M9 0v12L1 6z" fill="currentColor" />
        </Svg>
    );
}

const penTools = [
    {
        name: "鼠标",
        icon: (
            <Svg w={18} h={28}>
                <path d="M1 0l17 17h-7l4.500 9-4 2-4-9L1 24z" fill="#000" />
            </Svg>
        ),
    },
    { name: "选择", icon: <Move size={26} strokeWidth={2.200} /> },
    {
        name: "激光笔",
        icon: (
            <Svg w={28} h={28}>
                <path d="M12 14l5-4 10 13-5 4z" fill="#000" />
                <path d="M11 1l1 6M4 5l5 5M1 13h6M4 21l4-4M20 3l-4 4" stroke="#000" strokeWidth="2.200" />
            </Svg>
        ),
    },
    null,
    {
        name: "画笔",
        icon: (
            <Svg w={20} h={30}>
                <path d="M10 0l2.500 5h-5zM7 6h6l4 15H3zM2 23h16v4a2 2 0 01-2 2H4a2 2 0 01-2-2z" fill="#000" />
            </Svg>
        ),
    },
    {
        name: "文本",
        color: "text-[#0a66f5]",
        icon: (
            <Svg w={22} h={26}>
                <path d="M0 0h22v6h-3l-1-2h-4.500v19h3v3h-11v-3h3V4H4L3 6H0z" fill="currentColor" />
            </Svg>
        ),
    },
    {
        name: "图形",
        icon: (
            <Svg w={26} h={26}>
                <circle cx="9.500" cy="9.500" r="7.500" stroke="#000" strokeWidth="3.400" />
                <path d="M20.500 9H23a2 2 0 012 2v12a2 2 0 01-2 2H11a2 2 0 01-2-2v-2.500c7 .5 12-4.500 11.500-11.500z" fill="#000" />
            </Svg>
        ),
    },
    {
        name: "橡皮擦",
        icon: (
            <Svg w={26} h={28}>
                <path d="M14 0l12 7-11 20H8L0 20z" fill="#000" />
                <path d="M6 14l6.500 4-3.500 7H8l-5-5z" fill="#fff" />
                <path d="M1 19.500l7 6.500h16" stroke="#000" strokeWidth="2" />
            </Svg>
        ),
    },
    null,
    { name: "撤销", icon: <BackArrow /> },
    { name: "重做", color: "text-[#aeb4bf]", icon: <BackArrow flip /> },
    {
        name: "清空",
        icon: (
            <Svg w={22} h={28}>
                <path d="M0 3h6V1h10v2h6v3H0zM1.500 8h19v16a4 4 0 01-4 4h-11a4 4 0 01-4-4z" fill="#000" />
                <path d="M8 12v10M14 12v10" stroke="#fff" strokeWidth="2" />
            </Svg>
        ),
    },
    {
        name: "批注设置",
        icon: (
            <Svg w={32} h={29}>
                <circle cx="15" cy="7" r="6.500" fill="#000" />
                <path d="M0 28c0-9 5-13 11-13h8c2 0 4 1 5 2-6 1-8 6-6 11z" fill="#000" />
                <circle cx="25.500" cy="22" r="6" fill="#000" />
                <path d="M22 25.500l7-7" stroke="#fff" strokeWidth="1.800" />
            </Svg>
        ),
    },
    {
        name: "保存",
        icon: (
            <Svg w={26} h={27}>
                <path d="M10 0h6v12h6l-9 9-9-9h6zM0 24h26v3H0z" fill="#000" />
            </Svg>
        ),
    },
];

function PenToolbar() {
    return (
        <div className="absolute bottom-[69px] left-1/2 flex h-[88px] w-[919px] -translate-x-1/2 items-center rounded-xl bg-white pl-2 text-[14px] text-black shadow-[0_0_10px_rgba(0,0,0,0.16)]">
            {penTools.map((tool, i) =>
                tool ? (
                    <button
                        type="button"
                        key={tool.name}
                        className={clsx("flex w-[72px] flex-col items-center pt-1", tool.color)}
                    >
                        <span className="flex h-8 items-center">{tool.icon}</span>
                        <span className="mt-[3px] leading-5 whitespace-nowrap">{tool.name}</span>
                    </button>
                ) : (
                    <span key={i} className="flex w-5 justify-center">
                        <span className="h-[52px] w-px bg-[#d5d5d8]" />
                    </span>
                )
            )}
            <button
                type="button"
                aria-label="关闭批注"
                className="absolute top-0 right-0 flex h-[29px] w-[29px] items-center justify-center rounded-tr-lg rounded-bl-[24px] bg-[#33373d] text-white"
            >
                <X size={16} strokeWidth={3.500} className="mb-1 ml-1" />
            </button>
        </div>
    );
}

function ShareBadge() {
    return (
        <div className="absolute top-[52px] left-[780px] flex h-[30px] items-center rounded-lg bg-[#2c2c2e] pr-1 pl-[11px] text-[14px] text-white shadow-lg">
            <Svg w={16} h={17}>
                <path d="M2 11v4M8 6.500V15M14 2v13" stroke="#1fc07a" strokeWidth="3.600" strokeLinecap="round" />
            </Svg>
            <span className="ml-3 w-[113px] whitespace-nowrap">您正在共享屏幕</span>
            <button type="button" className="h-[22px] w-[67px] rounded bg-[#8e372f] text-[13px] whitespace-nowrap">
                结束共享
            </button>
        </div>
    );
}

function Mic({ w, h }: { w: number; h: number }) {
    return (
        <Svg w={w} h={h} box="0 0 36 43">
            <rect x="9" y="0" width="18" height="30" rx="8" fill="currentColor" />
            <path d="M2 21c0 9 7 15 16 15s16-6 16-15M18 35v8" stroke="currentColor" strokeWidth="4" />
        </Svg>
    );
}

function CallPanel() {
    return (
        <aside className="relative flex w-72 shrink-0 flex-col pt-[107px] pl-[6px] font-[Roboto,sans-serif]">
            <span className="absolute top-[47px] right-14 h-3 w-3 rounded-full bg-[#3ddc84]" />
            <div className="relative flex h-48 w-48 items-center justify-center rounded-full bg-white">
                <span className="font-['Noto_Sans',sans-serif] text-[32px] leading-none font-bold text-black italic">
                    &lt;!Altzin&gt;
                </span>
                <span className="absolute top-[156px] flex h-[60px] w-[60px] items-center justify-center rounded-full bg-[#424554]/60 text-white">
                    <Mic w={36} h={43} />
                </span>
            </div>
            <p className="mt-[42px] w-48 text-center text-[36px] leading-[42px] text-white">Altzin</p>
            <button
                type="button"
                aria-label="麦克风"
                className="mt-auto mb-[108px] ml-[30px] flex h-36 w-36 items-center justify-center rounded-full bg-[#26282b] text-[#a0a1a3]"
            >
                <Mic w={60} h={76} />
            </button>
        </aside>
    );
}

export default function App() {
    return (
        <div className="flex h-screen flex-col overflow-hidden bg-black font-['Noto_Sans','Noto_Sans_CJK_SC',sans-serif]">
            <div className="flex min-h-0 flex-1">
                <div className="w-72 shrink-0" />
                <div className="relative flex min-w-0 flex-1 flex-col">
                    <header className="shrink-0">
                        <TitleBar />
                        <TabRow />
                        <Ribbon />
                    </header>
                    <Document />
                    <StatusBar />
                    <Taskbar />
                    <ShareBadge />
                    <PenToolbar />
                </div>
                <CallPanel />
            </div>
            <div className="flex h-12 shrink-0 items-center justify-center bg-[#222325]">
                <span className="mb-[6px] h-3 w-[600px] rounded-full bg-[#919294]" />
            </div>
        </div>
    );
}
